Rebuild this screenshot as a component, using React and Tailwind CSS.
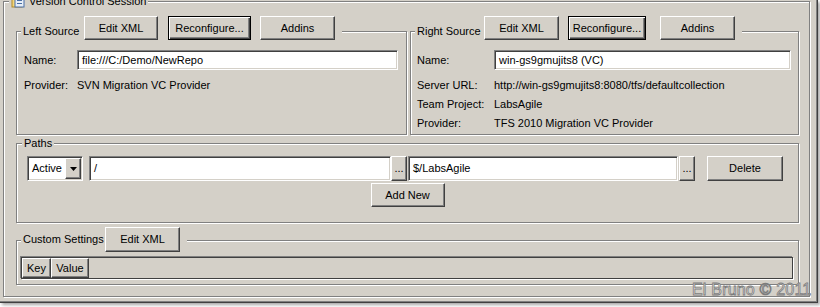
const face = 'bg-[#d4d0c8]';
const raised =
  'border border-t-white border-l-white border-r-[#404040] border-b-[#404040] shadow-[inset_-1px_-1px_0_#808080]';
const sunken =
  'border border-t-[#808080] border-l-[#808080] border-r-white border-b-white shadow-[inset_1px_1px_0_#404040,inset_-1px_-1px_0_#d4d0c8]';
const etched = 'border border-[#808080] shadow-[inset_1px_1px_0_#fff,1px_1px_0_#fff]';

function Button({ children, className = '', isDefault = false }) {
  // default button gets the black frame
  const frame = isDefault
    ? 'border border-black shadow-[inset_1px_1px_0_#fff,inset_-1px_-1px_0_#404040,inset_-2px_-2px_0_#808080]'
    : raised;
  return (
    <button className={`${face} ${frame} flex items-center justify-center text-[11px] text-black ${className}`}>
      {children}
    </button>
  );
}

function TextBox({ value, className = '' }) {
  return (
    <div className={`bg-white ${sunken} flex items-center px-[4px] text-[11px] text-black ${className}`}>
      {value}
    </div>
  );
}

function SourceGroup({ title, labelW, buttons, fields, nameLabelW, nameW, className = '', pl }) {
  return (
    <div className={`${etched} flex flex-col ${className}`}>
      {/* header sits on the top border */}
      <div className={`-mt-[16px] ml-[4px] self-start ${face} flex items-center pr-[7px] h-[24px]`}>
        <span className={`${labelW} pl-[2px] pt-[6px] text-[11px]`}>{title}</span>
        {buttons.map((b) => (
          <Button key={b.text} className={`${b.cls} h-[24px]`} isDefault={b.def}>
            {b.text}
          </Button>
        ))}
      </div>
      <div className={`flex flex-col ${pl} pb-[1px]`}>
        <div className="flex items-center mt-[10px]">
          <span className={`${nameLabelW} text-[11px]`}>Name:</span>
          <TextBox value={fields.name} className={`${nameW} h-[20px]`} />
        </div>
        <div className="mt-[6px] flex flex-col">
          {fields.rows.map(([k, v]) => (
            <div key={k} className="flex items-center h-[19px] text-[11px]">
              <span className={nameLabelW}>{k}</span>
              <span>{v}</span>
            </div>
          ))}
        </div>
      </div>
    </div>
  );
}

export default function App() {
  return (
    <div
      className="relative w-[820px] h-[307px] bg-white overflow-hidden text-black"
      style={{ fontFamily: '"Liberation Sans", Arial, sans-serif' }}
    >
      <div className={`w-[818px] h-[303px] ${face} overflow-hidden border-r border-b border-[#404040] shadow-[inset_-1px_-1px_0_#808080,2px_2px_3px_rgba(0,0,0,0.35)] pl-[3px] pr-[7px]`}>
        {/* Version Control Session */}
        <div className={`mt-[1px] ${etched} flex flex-col pl-[12px] pr-[10px] pb-[11px]`}>
          <div className={`-mt-[8px] -ml-[7px] self-start ${face} flex items-center gap-[4px] px-[2px] h-[14px]`}>
            <svg width="14" height="14" viewBox="0 0 14 14">
              <rect x="1" y="1" width="10" height="12" fill="#f4d67a" stroke="#b08a2a" />
              <rect x="4" y="3" width="9" height="10" fill="#e6eef8" stroke="#4a6fa5" />
              <rect x="6" y="6" width="5" height="1" fill="#4a6fa5" />
              <rect x="6" y="9" width="5" height="1" fill="#4a6fa5" />
            </svg>
            <span className="text-[11px]">Version Control Session</span>
          </div>

          <div className="flex gap-[3px] mt-[23px]">
            <SourceGroup
              title="Left Source"
              labelW="w-[63px]"
              className="w-[391px]"
              pl="pl-[7px]"
              nameLabelW="w-[53px]"
              nameW="w-[321px]"
              buttons={[
                { text: 'Edit XML', cls: 'w-[74px]' },
                { text: 'Reconfigure...', cls: 'w-[83px] ml-[10px]', def: true },
                { text: 'Addins', cls: 'w-[75px] ml-[9px]' },
              ]}
              fields={{
                name: 'file:///C:/Demo/NewRepo',
                rows: [['Provider:', 'SVN Migration VC Provider']],
              }}
            />
            <SourceGroup
              title="Right Source"
              labelW="w-[69px]"
              className="w-[389px]"
              pl="pl-[6px]"
              nameLabelW="w-[77px]"
              nameW="w-[297px]"
              buttons={[
                { text: 'Edit XML', cls: 'w-[75px]' },
                { text: 'Reconfigure...', cls: 'w-[78px] ml-[9px]', def: true },
                { text: 'Addins', cls: 'w-[75px] ml-[14px]' },
              ]}
              fields={{
                name: 'win-gs9gmujits8 (VC)',
                rows: [
                  ['Server URL:', 'http://win-gs9gmujits8:8080/tfs/defaultcollection'],
                  ['Team Project:', 'LabsAgile'],
                  ['Provider:', 'TFS 2010 Migration VC Provider'],
                ],
              }}
            />
          </div>

          {/* Paths */}
          <div className={`mt-[8px] w-[783px] ${etched} flex flex-col pb-[15px]`}>
            <div className={`-mt-[8px] ml-[5px] self-start ${face} h-[14px] px-[2px] flex items-center text-[11px]`}>
              Paths
            </div>
            <div className="flex items-center mt-[6px] pl-[10px] h-[25px]">
              <div className={`w-[56px] h-[25px] bg-white ${sunken} flex items-center pl-[4px] pr-[1px] text-[11px]`}>
                <span className="flex-1">Active</span>
                <div className={`w-[16px] h-[21px] ${face} ${raised} flex items-center justify-center`}>
                  <svg width="7" height="4" viewBox="0 0 7 4">
                    <path d="M0 0h7L3.5 4z" fill="#000" />
                  </svg>
                </div>
              </div>
              <TextBox value="/" className="ml-[6px] w-[302px] h-[25px]" />
              <Button className="w-[16px] h-[25px] items-end pb-[4px]">...</Button>
              <TextBox value="$/LabsAgile" className="ml-[1px] w-[270px] h-[25px]" />
              <Button className="ml-[1px] w-[16px] h-[25px] items-end pb-[4px]">...</Button>
              <Button className="ml-[12px] w-[76px] h-[25px]">Delete</Button>
            </div>
            <div className="flex justify-center mt-[2px]">
              <Button className="w-[74px] h-[24px]">Add New</Button>
            </div>
          </div>

          {/* Custom Settings */}
          <div className={`mt-[17px] w-[783px] ${etched} flex flex-col pb-[5px]`}>
            <div className={`-mt-[14px] ml-[4px] self-start ${face} h-[25px] pr-[7px] flex items-center`}>
              <span className="w-[84px] pl-[2px] text-[11px]">Custom Settings</span>
              <Button className="w-[75px] h-[25px]">Edit XML</Button>
            </div>
            <div className="mt-[5px] ml-[4px] w-[772px] h-[22px] border border-[#404040] shadow-[-1px_-1px_0_#808080,1px_1px_0_#fff] flex">
              <div className={`w-[29px] h-[20px] ${raised} flex items-center justify-center text-[11px]`}>Key</div>
              <div className={`w-[38px] h-[20px] ${raised} flex items-center justify-center text-[11px]`}>Value</div>
            </div>
          </div>
        </div>
      </div>

      {/* watermark */}
      <div className="absolute left-[692px] top-[282px] text-[16px] tracking-[0.2px] leading-none text-[#ececec] [-webkit-text-stroke:0.8px_#7c7c7c] whitespace-nowrap">
        El Bruno © 2011
      </div>
    </div>
  );
}
